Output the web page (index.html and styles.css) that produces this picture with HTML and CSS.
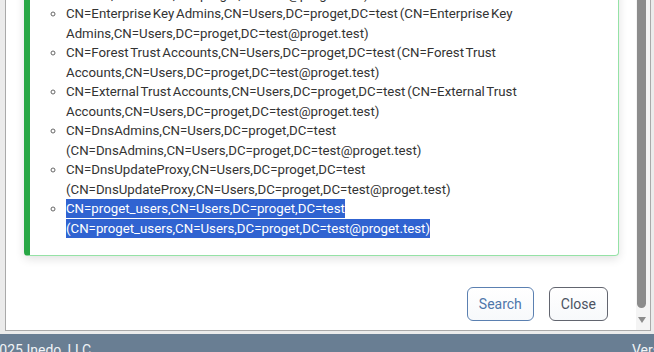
FILE: index.html
```html
<!DOCTYPE html>
<html>
<head>
    <title>Search Groups</title>
    <link rel="stylesheet" href="styles.css">
</head>
<body>
    <div class="dialog">
        <div class="dialog-body">
            <div class="result-card">
                <ul class="group-list">
                    <li>CN=Key Admins,CN=Users,DC=proget,DC=test (CN=Key Admins,CN=Users,DC=proget,DC=test@proget.test)</li>
                    <li>CN=Enterprise Key Admins,CN=Users,DC=proget,DC=test (CN=Enterprise Key Admins,CN=Users,DC=proget,DC=test@proget.test)</li>
                    <li>CN=Forest Trust Accounts,CN=Users,DC=proget,DC=test (CN=Forest Trust Accounts,CN=Users,DC=proget,DC=test@proget.test)</li>
                    <li>CN=External Trust Accounts,CN=Users,DC=proget,DC=test (CN=External Trust Accounts,CN=Users,DC=proget,DC=test@proget.test)</li>
                    <li>CN=DnsAdmins,CN=Users,DC=proget,DC=test (CN=DnsAdmins,CN=Users,DC=proget,DC=test@proget.test)</li>
                    <li>CN=DnsUpdateProxy,CN=Users,DC=proget,DC=test (CN=DnsUpdateProxy,CN=Users,DC=proget,DC=test@proget.test)</li>
                    <li><span class="selected">CN=proget_users,CN=Users,DC=proget,DC=test (CN=proget_users,CN=Users,DC=proget,DC=test@proget.test)</span></li>
                </ul>
            </div>
            <div class="dialog-buttons">
                <button class="btn btn-search">Search</button>
                <button class="btn btn-close">Close</button>
            </div>
        </div>
        <div class="scrollbar">
            <div class="scroll-thumb"></div>
            <div class="scroll-arrow"></div>
        </div>
    </div>
    <div class="footer">
        <span class="copyright">&copy; 2025 Inedo, LLC</span>
        <span class="version">Version 2025.4 (Build 12)</span>
    </div>
</body>
</html>
```

FILE: styles.css
```css
html, body {
    margin: 0;
    height: 352px;
    overflow: hidden;
}

body {
    font-family: Roboto, "Liberation Sans", Arial, sans-serif;
    background-color: #ebebeb;
    color: #333;
}

.dialog {
    display: flex;
    width: 644px;
    height: 330px;
    margin-left: 5px;
    border: 1px solid #a9a9a9;
    border-top: none;
    background-color: #fff;
}

.dialog-body {
    flex: 1;
    display: flex;
    flex-direction: column;
    padding: 0 17px 0 18px;
    overflow: hidden;
}

/* content is scrolled down, so the top of the card sits above the window */
.result-card {
    margin-top: -46px;
    padding: 10px 16px 17px 0;
    background-color: #fff;
    border: 1px solid #95e2a6;
    border-left: 6px solid #28a745;
    border-radius: 4px;
    box-shadow: 0 3px 10px rgba(0, 0, 0, 0.12);
}

.group-list {
    list-style-type: circle;
    margin: 0;
    padding-left: 36px;
    font-size: 13.25px;
    line-height: 19.5px;
    word-spacing: -1.5px;
}

.group-list li::marker {
    color: #666;
}

.selected {
    background-color: #3063d1;
    color: #fff;
    padding: 2px 0;
}

.dialog-buttons {
    display: flex;
    justify-content: flex-end;
    gap: 15px;
    margin-top: 31px;
    padding-right: 11px;
}

.btn {
    height: 34px;
    padding: 0 11px;
    font-family: Roboto, "Liberation Sans", Arial, sans-serif;
    font-size: 14px;
    background: linear-gradient(#fff, #f7f9fb);
    border-radius: 6px;
    cursor: pointer;
}

.btn-search {
    border: 1px solid #5b80b1;
    color: #4e76aa;
}

.btn-close {
    border: 1px solid #62656f;
    color: #4c5362;
}

.scrollbar {
    width: 14px;
    display: flex;
    flex-direction: column;
    align-items: center;
    background-color: #f4f4f4;
}

.scroll-thumb {
    width: 9px;
    height: 308px;
    margin-right: 3px;
    background-color: #8c8c8c;
    border-radius: 0 0 5px 5px;
}

.scroll-arrow {
    width: 0;
    height: 0;
    margin-top: 9px;
    margin-right: 3px;
    border-left: 4px solid transparent;
    border-right: 4px solid transparent;
    border-top: 6px solid #8c8c8c;
}

.footer {
    display: flex;
    margin-top: 3px;
    height: 40px;
    width: 900px;
    padding-top: 8px;
    box-sizing: border-box;
    background-color: #697e93;
    color: #f0f3f6;
    font-size: 14px;
    white-space: nowrap;
}

.copyright {
    flex-shrink: 0;
    width: 632px;
    text-indent: -23px;
}
```
